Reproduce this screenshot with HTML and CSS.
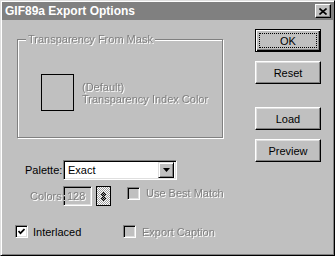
FILE: index.html
```html
<!DOCTYPE html>
<html lang="en">
<head>
  <meta charset="UTF-8">
  <title>GIF89a Export Options</title>
  <link rel="stylesheet" href="styles.css">
</head>
<body>

<div class="window">
  <div class="titlebar">
    <span class="title">GIF89a Export Options</span>
    <span class="close">
      <svg width="8" height="7" viewBox="0 0 8 7">
        <path d="M0.5 0.5 L7.5 6.5 M7.5 0.5 L0.5 6.5" stroke="#000" stroke-width="1.6" fill="none"/>
      </svg>
    </span>
  </div>

  <div class="content">
    <div class="left">
      <fieldset class="group">
        <legend class="disabled">Transparency From Mask</legend>
        <div class="swatch-row">
          <div class="swatch"></div>
          <div class="disabled swatch-text">(Default)<br>Transparency Index Color</div>
        </div>
      </fieldset>

      <div class="palette-row">
        <label class="palette-label">Palette:</label>
        <div class="select">
          <span class="select-value">Exact</span>
          <span class="drop">
            <svg width="7" height="4" viewBox="0 0 7 4"><path d="M0 0 H7 L3.5 4 Z" fill="#000"/></svg>
          </span>
        </div>
      </div>

      <div class="colors-row">
        <label class="colors-label disabled">Colors:</label>
        <div class="field"><span class="disabled">128</span></div>
        <div class="picker">
          <svg width="5" height="9" viewBox="0 0 5 9" shape-rendering="crispEdges">
            <rect x="2" y="0" width="1" height="1"/>
            <rect x="1" y="1" width="1" height="1"/><rect x="3" y="1" width="1" height="1"/>
            <rect x="0" y="2" width="1" height="1"/><rect x="2" y="2" width="1" height="1"/><rect x="4" y="2" width="1" height="1"/>
            <rect x="1" y="3" width="1" height="1"/><rect x="3" y="3" width="1" height="1"/>
            <rect x="2" y="4" width="1" height="1"/>
            <rect x="1" y="5" width="1" height="1"/><rect x="3" y="5" width="1" height="1"/>
            <rect x="0" y="6" width="1" height="1"/><rect x="2" y="6" width="1" height="1"/><rect x="4" y="6" width="1" height="1"/>
            <rect x="1" y="7" width="1" height="1"/><rect x="3" y="7" width="1" height="1"/>
            <rect x="2" y="8" width="1" height="1"/>
          </svg>
        </div>
        <span class="check off best-check"></span>
        <span class="disabled best-text">Use Best Match</span>
      </div>

      <div class="checks-row">
        <div class="check-item interlaced">
          <span class="check on">
            <svg width="7" height="7" viewBox="0 0 7 7"><path d="M0.5 3 L2.5 5.2 L6.5 1" stroke="#000" stroke-width="1.7" fill="none"/></svg>
          </span>
          <span class="check-text">Interlaced</span>
        </div>
        <div class="check-item">
          <span class="check off"></span>
          <span class="check-text caption disabled">Export Caption</span>
        </div>
      </div>
    </div>

    <div class="buttons">
      <button class="btn default"><span class="focus">OK</span></button>
      <button class="btn reset">Reset</button>
      <button class="btn load">Load</button>
      <button class="btn preview">Preview</button>
    </div>
  </div>
</div>

</body>
</html>
```

FILE: styles.css
```css
body {
  margin: 0;
  background: #c0c0c0;
  font-family: "Liberation Sans", Arial, sans-serif;
  font-size: 11px;
  color: #000;
}
.window {
  width: 335px;
  height: 256px;
  box-sizing: border-box;
  background: #c0c0c0;
  border: 1px solid;
  border-color: #dfdfdf #000 #000 #dfdfdf;
  box-shadow: inset 1px 1px #fff, inset -1px -1px #808080;
  padding: 1px;
}
.titlebar {
  height: 18px;
  background: #808080;
  display: flex;
  align-items: center;
  justify-content: space-between;
  padding: 0 2px 0 3px;
}
.title {
  color: #fff;
  font-weight: bold;
  font-size: 12px;
}
.close {
  width: 16px;
  height: 14px;
  box-sizing: border-box;
  background: #c0c0c0;
  border: 1px solid;
  border-color: #fff #000 #000 #fff;
  box-shadow: inset -1px -1px #808080;
  display: flex;
  align-items: center;
  justify-content: center;
}
.close svg {
  display: block;
}
.content {
  display: flex;
}
.left {
  width: 253px;
  padding-top: 13px;
}
.disabled {
  color: #808080;
  text-shadow: 1px 1px 0 #fff;
  will-change: transform;
}

/* group box */
.group {
  margin: 0 0 0 15px;
  padding: 0;
  width: 206px;
  height: 105px;
  box-sizing: border-box;
  border: 1px solid #808080;
  box-shadow: inset 1px 1px 0 #fff, 1px 1px 0 #fff;
  min-inline-size: 0;
}
.group legend {
  margin-left: 8px;
  padding: 0 2px;
  line-height: 13px;
  background: #c0c0c0;
}
.swatch-row {
  display: flex;
  align-items: center;
  margin: 28px 0 0 23px;
}
.swatch {
  width: 33px;
  height: 37px;
  box-sizing: border-box;
  border: 1px solid #000;
}
.swatch-text {
  margin-left: 8px;
  line-height: 12px;
}

/* palette */
.palette-row {
  display: flex;
  align-items: center;
  margin: 22px 0 0 23px;
}
.palette-label {
  width: 38px;
}
.select {
  width: 114px;
  height: 20px;
  box-sizing: border-box;
  background: #fff;
  border: 1px solid;
  border-color: #808080 #fff #fff #808080;
  box-shadow: inset 1px 1px #000, inset -1px -1px #dfdfdf;
  display: flex;
  align-items: center;
  padding: 2px;
}
.select-value {
  padding-left: 2px;
}
.drop {
  margin-left: auto;
  width: 16px;
  height: 16px;
  box-sizing: border-box;
  background: #c0c0c0;
  border: 1px solid;
  border-color: #dfdfdf #000 #000 #dfdfdf;
  box-shadow: inset 1px 1px #fff, inset -1px -1px #808080;
  display: flex;
  align-items: center;
  justify-content: center;
}
.drop svg {
  display: block;
}

/* colors */
.colors-row {
  display: flex;
  align-items: center;
  margin: 6px 0 0 28px;
}
.colors-label {
  width: 33px;
}
.field {
  width: 29px;
  height: 20px;
  box-sizing: border-box;
  border: 1px solid;
  border-color: #808080 #fff #fff #808080;
  box-shadow: inset 1px 1px #000, inset -1px -1px #dfdfdf;
  display: flex;
  align-items: center;
  padding-left: 3px;
}
.picker {
  width: 15px;
  height: 20px;
  box-sizing: border-box;
  margin-left: 4px;
  border: 1px solid #000;
  background-image: repeating-conic-gradient(#fff 0 25%, #a0a0a0 0 50%);
  background-size: 2px 2px;
  display: flex;
  align-items: center;
  justify-content: center;
}
.picker svg {
  display: block;
}
.best-check {
  margin-left: 16px;
  align-self: flex-start;
  margin-top: 1px;
}
.best-text {
  margin-left: 6px;
  align-self: flex-start;
  margin-top: 1px;
}

/* checkboxes */
.check {
  width: 13px;
  height: 13px;
  box-sizing: border-box;
  border: 1px solid;
  border-color: #808080 #fff #fff #808080;
  box-shadow: inset 1px 1px #000, inset -1px -1px #dfdfdf;
  display: flex;
  align-items: center;
  justify-content: center;
}
.check.on {
  background: #fff;
}
.check.off {
  background: #c0c0c0;
}
.check svg {
  display: block;
}
.checks-row {
  display: flex;
  margin: 19px 0 0 13px;
}
.check-item {
  display: flex;
  align-items: center;
}
.interlaced {
  width: 108px;
}
.check-text {
  margin-left: 5px;
}
.check-text.caption {
  margin-left: 6px;
}

/* buttons */
.buttons {
  margin-top: 9px;
}
.btn {
  display: flex;
  align-items: center;
  justify-content: center;
  width: 66px;
  height: 23px;
  box-sizing: border-box;
  padding: 0;
  background: #c0c0c0;
  border: 1px solid;
  border-color: #fff #000 #000 #fff;
  box-shadow: inset -1px -1px #808080, inset 1px 1px #dfdfdf;
  font-family: "Liberation Sans", Arial, sans-serif;
  font-size: 11px;
  color: #000;
}
.btn.default {
  border-color: #000;
  box-shadow: inset 1px 1px #fff, inset -1px -1px #000, inset -2px -2px #808080;
  padding: 3px;
  align-items: stretch;
}
.focus {
  flex: 1;
  border: 1px dotted #000;
  display: flex;
  align-items: center;
  justify-content: center;
}
.reset {
  margin-top: 9px;
}
.load {
  margin-top: 23px;
}
.preview {
  margin-top: 9px;
}
```
